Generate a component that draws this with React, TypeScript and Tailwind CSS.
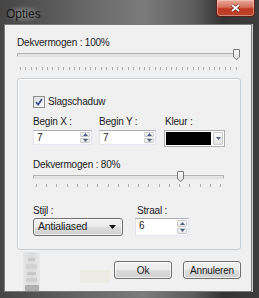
import type { ReactNode } from "react";

function Ticks({ count }: { count: number }) {
	return (
		<div className="flex h-[4px] justify-between px-[3px]">
			{Array.from({ length: count }, (_, i) => (
				<span key={i} className="h-[3px] w-px bg-[#ababab]" />
			))}
		</div>
	);
}

function Slider({ value }: { value: number }) {
	return (
		<div className="relative h-[12px]">
			<div className="mt-[4px] h-[4px] rounded-[1px] border border-[#b3b3b3] border-b-[#e2e2e2] bg-[#e4e4e4]" />
			{/* thumb */}
			<svg
				width="7"
				height="11"
				viewBox="0 0 7 11"
				className="absolute top-0"
				style={{ left: `calc((100% - 7px) * ${value / 100})` }}
			>
				<defs>
					<linearGradient id={`th${value}`} x1="0" x2="0" y1="0" y2="1">
						<stop offset="0" stopColor="#ffffff" />
						<stop offset="1" stopColor="#d9d9d9" />
					</linearGradient>
				</defs>
				<path
					d="M1 0.5 H6 Q6.5 0.5 6.5 1 V8 L3.5 10.5 L0.5 8 V1 Q0.5 0.5 1 0.5 Z"
					fill={`url(#th${value})`}
					stroke="#777"
				/>
			</svg>
		</div>
	);
}

function Arrow({ up }: { up?: boolean }) {
	return (
		<svg width="5" height="3" viewBox="0 0 5 3">
			<path d={up ? "M0 3 L2.5 0 L5 3 Z" : "M0 0 L5 0 L2.5 3 Z"} fill="#4d6185" />
		</svg>
	);
}

function Spinner() {
	return (
		<div className="my-px mr-px flex w-[10px] flex-col gap-px">
			<div className="flex flex-1 items-center justify-center rounded-[1px] border border-[#c9c9c9] bg-[linear-gradient(#fafafa,#e4e4e4)]">
				<Arrow up />
			</div>
			<div className="flex flex-1 items-center justify-center rounded-[1px] border border-[#c9c9c9] bg-[linear-gradient(#fafafa,#e4e4e4)]">
				<Arrow />
			</div>
		</div>
	);
}

function NumberInput({ value, className }: { value: string; className: string }) {
	return (
		<div
			className={`flex border border-[#abadb3] border-b-[#e3e9ef] border-l-[#e2e3ea] border-r-[#dbdfe6] bg-white ${className}`}
		>
			<span className="flex-1 pl-[3px] leading-[14px]">{value}</span>
			<Spinner />
		</div>
	);
}

function Label({ children, className = "" }: { children: ReactNode; className?: string }) {
	return <div className={`leading-[13px] ${className}`}>{children}</div>;
}

function Button({ children }: { children: ReactNode }) {
	return (
		<div className="flex h-[18px] w-[58px] items-center justify-center rounded-[3px] border border-[#707070] bg-[linear-gradient(#f2f2f2,#ebebeb_50%,#dddddd_50%,#cfcfcf)] shadow-[inset_0_0_0_1px_rgba(255,255,255,0.7)]">
			{children}
		</div>
	);
}

export default function App() {
	return (
		<div className="flex h-[298px] w-[259px] flex-col overflow-hidden bg-[linear-gradient(90deg,#454545,#5e5e5e_25%,#7c7c7c_55%,#5c5c5c_75%,#333_86%,#3e3e3e)] font-['Liberation_Sans',Arial,sans-serif] text-[10px] tracking-[-0.2px] text-[#1b1b1b]">
			{/* Title bar */}
			<div className="flex h-[24px] shrink-0 items-start">
				<span className="ml-[5px] mt-[5px] rounded-[6px] bg-[radial-gradient(closest-side,rgba(200,200,200,0.55),rgba(200,200,200,0))] px-[1px] text-[12px] tracking-normal text-[#151515]">
					Opties
				</span>
				<div className="ml-auto mr-[4px] flex h-[17px] w-[39px] items-center justify-center rounded-b-[4px] border border-t-0 border-[#5e2118] bg-[linear-gradient(#e9a999,#d4705c_45%,#c0391f_55%,#b8452f)] shadow-[inset_0_0_0_1px_rgba(255,220,210,0.45)]">
					<svg width="9" height="8" viewBox="0 0 9 8">
						<path d="M1 1 L8 7 M8 1 L1 7" stroke="#5a1e16" strokeWidth="3" />
						<path d="M1 1 L8 7 M8 1 L1 7" stroke="#fff" strokeWidth="1.7" />
					</svg>
				</div>
			</div>

			{/* Client area */}
			<div className="mb-[6px] ml-[4px] mr-[7px] flex flex-1 flex-col border border-[#7c7c7c] bg-[#f0f0f0] pl-[12px] pr-[11px] pt-[11px] shadow-[1px_0_0_#cfcfcf]">
				<Label>Dekvermogen : 100%</Label>
				<Slider value={100} />
				<div className="mt-[6px]">
					<Ticks count={41} />
				</div>

				{/* Group box */}
				<div className="mr-[-1px] mt-[7px] flex h-[172px] flex-col rounded-[3px] border border-[#c5cdd2] pl-[15px] pr-[16px] pt-[16px] shadow-[inset_1px_1px_0_#fff]">
					<div className="flex h-[13px] items-center gap-[2px]">
						<div className="flex h-[12px] w-[12px] items-center justify-center border border-[#8e8f8f] bg-[linear-gradient(135deg,#dcdcdc,#fdfdfd)]">
							<svg width="8" height="8" viewBox="0 0 8 8">
								<path d="M1 4.2 L3.2 6.5 L7 1" fill="none" stroke="#3c5193" strokeWidth="1.8" />
							</svg>
						</div>
						<span className="ml-px">Slagschaduw</span>
					</div>

					<div className="mt-[7px] flex gap-[7px]">
						<div className="flex w-[59px] flex-col gap-[2px]">
							<Label>Begin X :</Label>
							<NumberInput value="7" className="h-[15px] w-[59px]" />
						</div>
						<div className="flex w-[57px] flex-col gap-[2px]">
							<Label>Begin Y :</Label>
							<NumberInput value="7" className="h-[15px] w-[57px]" />
						</div>
						<div className="ml-px flex w-[61px] flex-col gap-[2px]">
							<Label className="pl-px">Kleur :</Label>
							<div className="flex h-[17px] w-[61px] gap-[2px] border border-[#abadb3] bg-white p-px">
								<div className="flex-1 bg-black" />
								<div className="flex w-[10px] items-center justify-center rounded-[1px] border border-[#c9c9c9] bg-[linear-gradient(#fafafa,#e2e2e2)]">
									<Arrow />
								</div>
							</div>
						</div>
					</div>

					<div className="mt-[12px] leading-[12px]">Dekvermogen : 80%</div>
					<Slider value={78} />
					<div className="mt-px">
						<Ticks count={19} />
					</div>

					<div className="mt-[16px] flex gap-[12px]">
						<div className="flex w-[90px] flex-col gap-px">
							<Label>Stijl :</Label>
							<div className="flex h-[18px] items-center justify-between rounded-[3px] border border-[#707070] bg-[linear-gradient(#f2f2f2,#ebebeb_50%,#dddddd_50%,#cfcfcf)] pl-[4px] pr-[6px] shadow-[inset_0_0_0_1px_rgba(255,255,255,0.7)]">
								<span className="text-[10.5px]">Antialiased</span>
								<svg width="7" height="4" viewBox="0 0 7 4">
									<path d="M0 0 H7 L3.5 4 Z" fill="#111" />
								</svg>
							</div>
						</div>
						<div className="flex w-[54px] flex-col gap-px">
							<Label className="pl-[2px]">Straal :</Label>
							<NumberInput value="6" className="h-[18px] w-[54px]" />
						</div>
					</div>
				</div>

				{/* Buttons row, with the faint glass ghost behind */}
				<div className="mr-[-1px] flex h-[41px] items-start">
					<div className="ml-[6px] mt-[2px] flex h-[39px] w-[17px] flex-col items-center gap-[3px] bg-[linear-gradient(90deg,#e6e6e6,#dadada,#e8e8e8)] pt-[6px]">
						<span className="h-[3px] w-[7px] bg-[#c8c8c8]" />
						<span className="h-[5px] w-[11px] bg-[#d3d3d3]" />
						<span className="h-[3px] w-[9px] bg-[#c8c8c8]" />
						<span className="h-[4px] w-[11px] bg-[#cecece]" />
						<span className="mt-auto h-[6px] w-[14px] bg-[#b0b0b0]" />
					</div>
					<div className="ml-[40px] mt-[20px] h-[13px] w-[30px] bg-[#ecece4]" />
					<div className="ml-auto mt-[11px] flex gap-[11px]">
						<Button>Ok</Button>
						<Button>Annuleren</Button>
					</div>
				</div>
			</div>
		</div>
	);
}
